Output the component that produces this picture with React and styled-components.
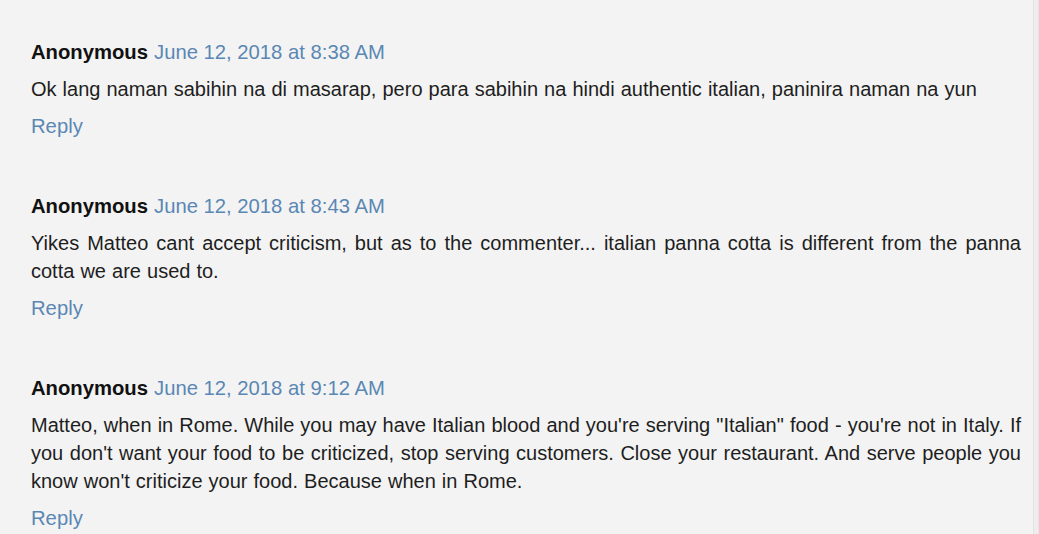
import React from 'react';
import styled, { createGlobalStyle } from 'styled-components';

const GlobalStyle = createGlobalStyle`
  html, body {
    margin: 0;
    padding: 0;
    background-color: #f3f3f3;
  }
  body {
    font-family: 'Liberation Sans', Arial, sans-serif;
  }
`

const Page = styled.div`
  display: flex;
  height: 534px;
  overflow: hidden;
  background-color: #f3f3f3;
`
const CommentList = styled.div`
  flex: 1;
  display: flex;
  flex-direction: column;
  gap: 52px;
  padding: 38px 12px 0 31px;
`
const Rail = styled.div`
  width: 4px;
  background-color: #ededed;
  border-left: 1px solid #e3e3e3;
  border-right: 1px solid #e6e6e6;
`
const CommentBlock = styled.div`
  display: flex;
  flex-direction: column;
  gap: 9px;
  font-size: 20.25px;
  line-height: 28px;
  color: #1e1e1e;
`
const CommentHeader = styled.div`
  white-space: nowrap;
`
const Author = styled.span`
  font-weight: bold;
  color: #111;
`
const Timestamp = styled.a`
  color: #5a87b3;
  text-decoration: none;
  margin-left: 6px;
`
const CommentBody = styled.p`
  margin: 0;
  font-size: 20px;
  word-spacing: 0.5px;
  text-align: justify;
`
const ReplyLink = styled.a`
  color: #5a87b3;
  text-decoration: none;
  align-self: flex-start;
`

const comments = [
    {
        date: 'June 12, 2018 at 8:38 AM',
        text: 'Ok lang naman sabihin na di masarap, pero para sabihin na hindi authentic italian, paninira naman na yun'
    },
    {
        date: 'June 12, 2018 at 8:43 AM',
        text: 'Yikes Matteo cant accept criticism, but as to the commenter... italian panna cotta is different from the panna cotta we are used to.'
    },
    {
        date: 'June 12, 2018 at 9:12 AM',
        text: 'Matteo, when in Rome. While you may have Italian blood and you\'re serving "Italian" food - you\'re not in Italy. If you don\'t want your food to be criticized, stop serving customers. Close your restaurant. And serve people you know won\'t criticize your food. Because when in Rome.'
    }
];

const App = () => {
    return (
        <>
            <GlobalStyle/>
            <Page>
                <CommentList>
                    {comments.map((c, i) => (
                        <CommentBlock key={i}>
                            <CommentHeader>
                                <Author>Anonymous</Author>
                                <Timestamp href="#">{c.date}</Timestamp>
                            </CommentHeader>
                            <CommentBody>{c.text}</CommentBody>
                            <ReplyLink href="#">Reply</ReplyLink>
                        </CommentBlock>
                    ))}
                </CommentList>
                <Rail/>
            </Page>
        </>
    );
};

export default App;
